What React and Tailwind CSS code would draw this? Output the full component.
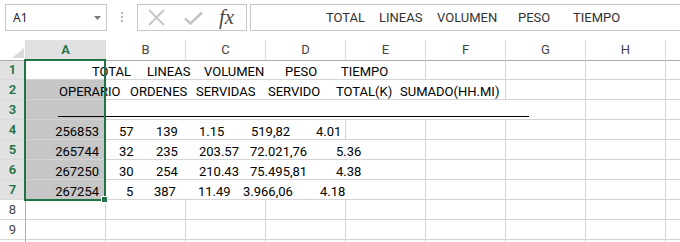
import clsx from 'clsx';

const CELL_FONT = "font-['Roboto','Liberation_Sans',sans-serif] text-[13px] text-black";
const COLS = ['A', 'B', 'C', 'D', 'E', 'F', 'G', 'H'];

// word positions are fixed widths so the spilled text lines up like the sheet
const ROW1 = [
  ['w-[55px]', 'TOTAL'],
  ['w-[57px]', 'LINEAS'],
  ['w-[81px]', 'VOLUMEN'],
  ['w-[56px]', 'PESO'],
  ['', 'TIEMPO'],
];

const ROW2 = [
  ['w-[71px]', 'OPERARIO'],
  ['w-[66px]', 'ORDENES'],
  ['w-[72px]', 'SERVIDAS'],
  ['w-[68px]', 'SERVIDO'],
  ['w-[64px]', 'TOTAL(K)'],
  ['', 'SUMADO(HH.MI)'],
];

const DATA = [
  {
    n: 4,
    id: '256853',
    ml: 'ml-[13px]',
    hide: [2, 3],
    words: [
      ['w-[37px]', '57'],
      ['w-[43px]', '139'],
      ['w-[52px]', '1.15'],
      ['w-[65px]', '519,82'],
      ['', '4.01'],
    ],
  },
  {
    n: 5,
    id: '265744',
    ml: 'ml-[13px]',
    hide: [2, 3, 4],
    words: [
      ['w-[37px]', '32'],
      ['w-[43px]', '235'],
      ['w-[51px]', '203.57'],
      ['w-[86px]', '72.021,76'],
      ['', '5.36'],
    ],
  },
  {
    n: 6,
    id: '267250',
    ml: 'ml-[13px]',
    hide: [2, 3, 4],
    words: [
      ['w-[37px]', '30'],
      ['w-[43px]', '254'],
      ['w-[51px]', '210.43'],
      ['w-[86px]', '75.495,81'],
      ['', '4.38'],
    ],
  },
  {
    n: 7,
    id: '267254',
    ml: 'ml-[20px]',
    hide: [2, 3, 4],
    words: [
      ['w-[28px]', '5'],
      ['w-[44px]', '387'],
      ['w-[45px]', '11.49'],
      ['w-[77px]', '3.966,06'],
      ['', '4.18'],
    ],
  },
];

function Spill({ ml, words }) {
  return (
    <div className={clsx('relative z-10 flex whitespace-nowrap leading-[23px]', ml, CELL_FONT)}>
      {words.map(([w, text]) => (
        <span key={text} className={clsx('shrink-0', w)}>
          {text}
        </span>
      ))}
    </div>
  );
}

function FormulaBar() {
  return (
    <div className="flex h-[40px] items-start pt-[4px]">
      <div className="ml-[5px] flex h-[27px] w-[102px] items-center justify-between border border-[#c6c6c6] pl-[7px] pr-[5px]">
        <span className="font-['Noto_Sans',sans-serif] text-[12px] text-[#222]">A1</span>
        <svg width="7" height="4" viewBox="0 0 7 4">
          <polygon points="0,0 7,0 3.5,4" fill="#7a7a7a" />
        </svg>
      </div>
      <div className="flex w-[30px] flex-col items-center gap-[2px] pt-[8px]">
        <span className="h-[2px] w-[2px] bg-[#b5b5b5]" />
        <span className="h-[2px] w-[2px] bg-[#b5b5b5]" />
        <span className="h-[2px] w-[2px] bg-[#b5b5b5]" />
      </div>
      <div className="flex h-[27px] w-[110px] items-center border border-[#c6c6c6]">
        <svg className="ml-[10px]" width="17" height="17" viewBox="0 0 17 17">
          <path d="M1 1 L16 16 M16 1 L1 16" stroke="#c4c4c4" strokeWidth="1.8" fill="none" />
        </svg>
        <svg className="ml-[19px]" width="19" height="14" viewBox="0 0 19 14">
          <path d="M1 7.5 L6.5 12.5 L18 1.5" stroke="#c4c4c4" strokeWidth="2.6" fill="none" />
        </svg>
        <span className="ml-[16px] font-['Liberation_Serif',serif] text-[21px] italic leading-none text-[#4a4a4a]">
          fx
        </span>
      </div>
      <div className="ml-[3px] flex h-[27px] flex-1 items-center border border-r-0 border-[#c6c6c6]">
        <div className="ml-[75px] flex whitespace-nowrap font-['Roboto','Liberation_Sans',sans-serif] text-[13px] text-[#333]">
          <span className="w-[53px] shrink-0">TOTAL</span>
          <span className="w-[58px] shrink-0">LINEAS</span>
          <span className="w-[81px] shrink-0">VOLUMEN</span>
          <span className="w-[55px] shrink-0">PESO</span>
          <span>TIEMPO</span>
        </div>
      </div>
    </div>
  );
}

function RowHeader({ n, selected }) {
  return (
    <div
      className={clsx(
        'flex h-[20px] items-center justify-center border-b border-r border-b-[#dadada] border-r-[#ababab] text-[13px]',
        "font-['Roboto','Liberation_Sans',sans-serif]",
        selected ? 'bg-[#e1e1e1] font-semibold text-[#217346]' : 'text-[#444]'
      )}
    >
      {n}
    </div>
  );
}

function Row({ n, selected, hide = [], grayA, a, b }) {
  return (
    <div className="grid h-[20px] grid-cols-[26px_repeat(8,80px)_1fr]">
      <RowHeader n={n} selected={selected} />
      {COLS.map((c, i) => (
        <div
          key={c}
          className={clsx(
            'relative h-[20px] min-w-0 border-b border-[#d4d4d4]',
            !hide.includes(i + 1) && 'border-r',
            i === 0 && grayA && 'bg-[#c6c6c6]'
          )}
        >
          {i === 0 && a}
          {i === 1 && b}
        </div>
      ))}
      <div className="h-[20px] border-b border-[#d4d4d4]" />
    </div>
  );
}

function Sheet() {
  return (
    <div className="relative">
      <div className="grid h-[20px] grid-cols-[26px_repeat(8,80px)_1fr] font-['Roboto','Liberation_Sans',sans-serif] text-[13px]">
        <div className="relative border-b border-r border-b-[#ababab] border-r-[#dadada]">
          <svg className="absolute bottom-[2px] right-[1px]" width="12" height="10" viewBox="0 0 12 10">
            <polygon points="12,0 12,10 0,10" fill="#dadada" />
          </svg>
        </div>
        {COLS.map((c, i) => (
          <div
            key={c}
            className={clsx(
              'flex items-center justify-center border-b border-r border-b-[#ababab] border-r-[#dadada]',
              i === 0 ? 'bg-[#e1e1e1] font-semibold text-[#217346]' : 'text-[#444]'
            )}
          >
            {c}
          </div>
        ))}
        <div className="border-b border-b-[#ababab]" />
      </div>

      <Row n={1} selected hide={[1, 2, 3, 4]} a={<Spill ml="ml-[66px]" words={ROW1} />} />
      <Row n={2} selected grayA hide={[1, 2, 3, 4, 5]} a={<Spill ml="ml-[33px]" words={ROW2} />} />
      <Row
        n={3}
        selected
        grayA
        hide={[1, 2, 3, 4, 5, 6]}
        a={<div className="relative z-10 ml-[32px] mt-[16px] h-px w-[471px] bg-black" />}
      />
      {DATA.map((r) => (
        <Row
          key={r.n}
          n={r.n}
          selected
          grayA
          hide={r.hide}
          a={<div className={clsx('pr-[6px] text-right leading-[23px]', CELL_FONT)}>{r.id}</div>}
          b={<Spill ml={r.ml} words={r.words} />}
        />
      ))}
      <Row n={8} />
      <Row n={9} />
      <Row n="" />

      {/* active selection A1:A7 */}
      <div className="pointer-events-none absolute left-[24px] top-[19px] z-20 h-[142px] w-[82px] border-2 border-[#217346]" />
      <div className="absolute left-[101px] top-[156px] z-30 h-[7px] w-[7px] border border-white bg-[#217346]" />
    </div>
  );
}

export default function App() {
  return (
    <div className="h-[242px] w-[680px] overflow-hidden bg-white">
      <FormulaBar />
      <Sheet />
    </div>
  );
}
